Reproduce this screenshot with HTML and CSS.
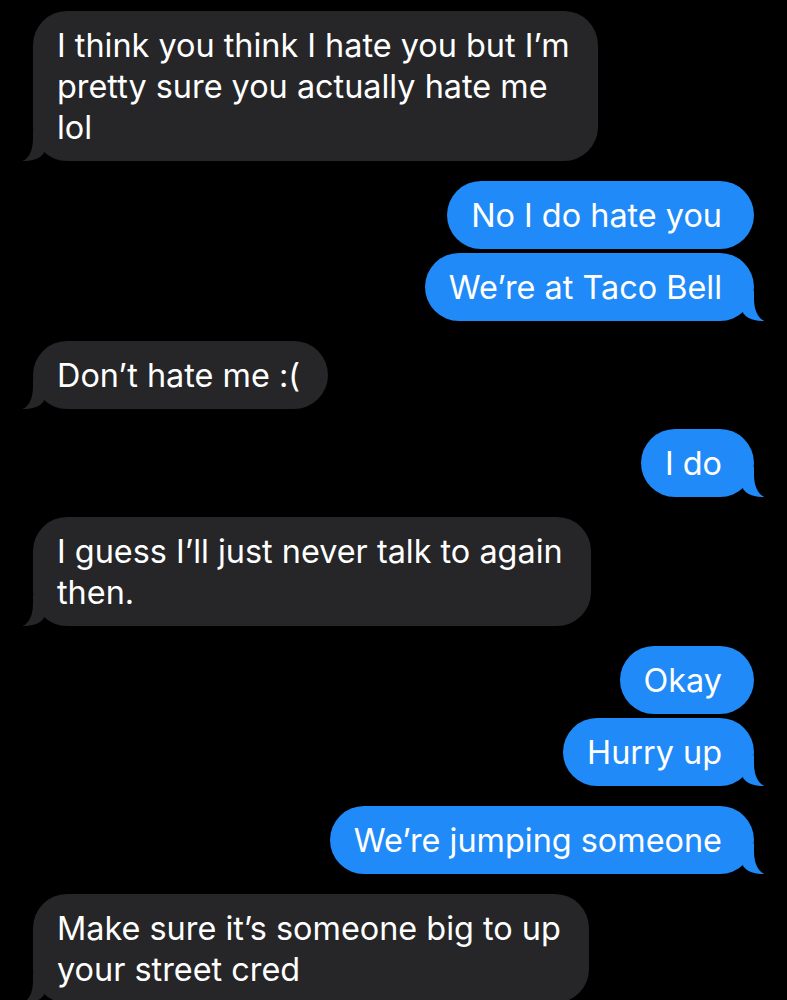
FILE: index.html
```html
<!DOCTYPE html>
<html lang="en">
<head>
  <meta charset="UTF-8" />
  <title>Messages</title>
  <link rel="stylesheet" href="styles.css">
</head>
<body>
  <div class="thread">

    <div class="group them">
      <div class="bubble tail">I think you think I hate you but I’m<br>pretty sure you actually hate me<br>lol</div>
    </div>

    <div class="group me">
      <div class="bubble">No I do hate you</div>
      <div class="bubble tail">We’re at Taco Bell</div>
    </div>

    <div class="group them">
      <div class="bubble tail">Don’t hate me :(</div>
    </div>

    <div class="group me">
      <div class="bubble tail">I do</div>
    </div>

    <div class="group them">
      <div class="bubble tail">I guess I’ll just never talk to again<br>then.</div>
    </div>

    <div class="group me">
      <div class="bubble">Okay</div>
      <div class="bubble tail">Hurry up</div>
    </div>

    <div class="group me">
      <div class="bubble tail">We’re jumping someone</div>
    </div>

    <div class="group them">
      <div class="bubble tail">Make sure it’s someone big to up<br>your street cred</div>
    </div>

  </div>
</body>
</html>
```

FILE: styles.css
```css
body {
  margin: 0;
  background: #000;
  font-family: Inter, "Noto Sans", sans-serif;
  color: #fff;
}
.thread {
  display: flex;
  flex-direction: column;
  gap: 20px;
  padding: 11px 33px 0;
}
.group {
  display: flex;
  flex-direction: column;
  gap: 4px;
}
.me {
  align-items: flex-end;
}
.them {
  align-items: flex-start;
}
.bubble {
  position: relative;
  border-radius: 34px;
  font-size: 32.4px;
  line-height: 41px;
  white-space: nowrap;
}
.me .bubble {
  padding: 13.5px 32px 13.5px 24px;
  background: #1f8af8;
}
.them .bubble {
  padding: 13.5px 28px 13.5px 24px;
  background: #262628;
}

/* tails */
.tail::before,
.tail::after {
  content: "";
  position: absolute;
  bottom: 0;
  height: 30px;
}
.me .tail::before {
  right: -10px;
  width: 22px;
  background: #1f8af8;
  border-bottom-left-radius: 20px 12px;
}
.me .tail::after {
  right: -40px;
  width: 40px;
  background: #000;
  border-bottom-left-radius: 12px 22px;
}
.them .tail::before {
  left: -10px;
  width: 22px;
  background: #262628;
  border-bottom-right-radius: 20px 12px;
}
.them .tail::after {
  left: -40px;
  width: 40px;
  background: #000;
  border-bottom-right-radius: 12px 22px;
}
```
